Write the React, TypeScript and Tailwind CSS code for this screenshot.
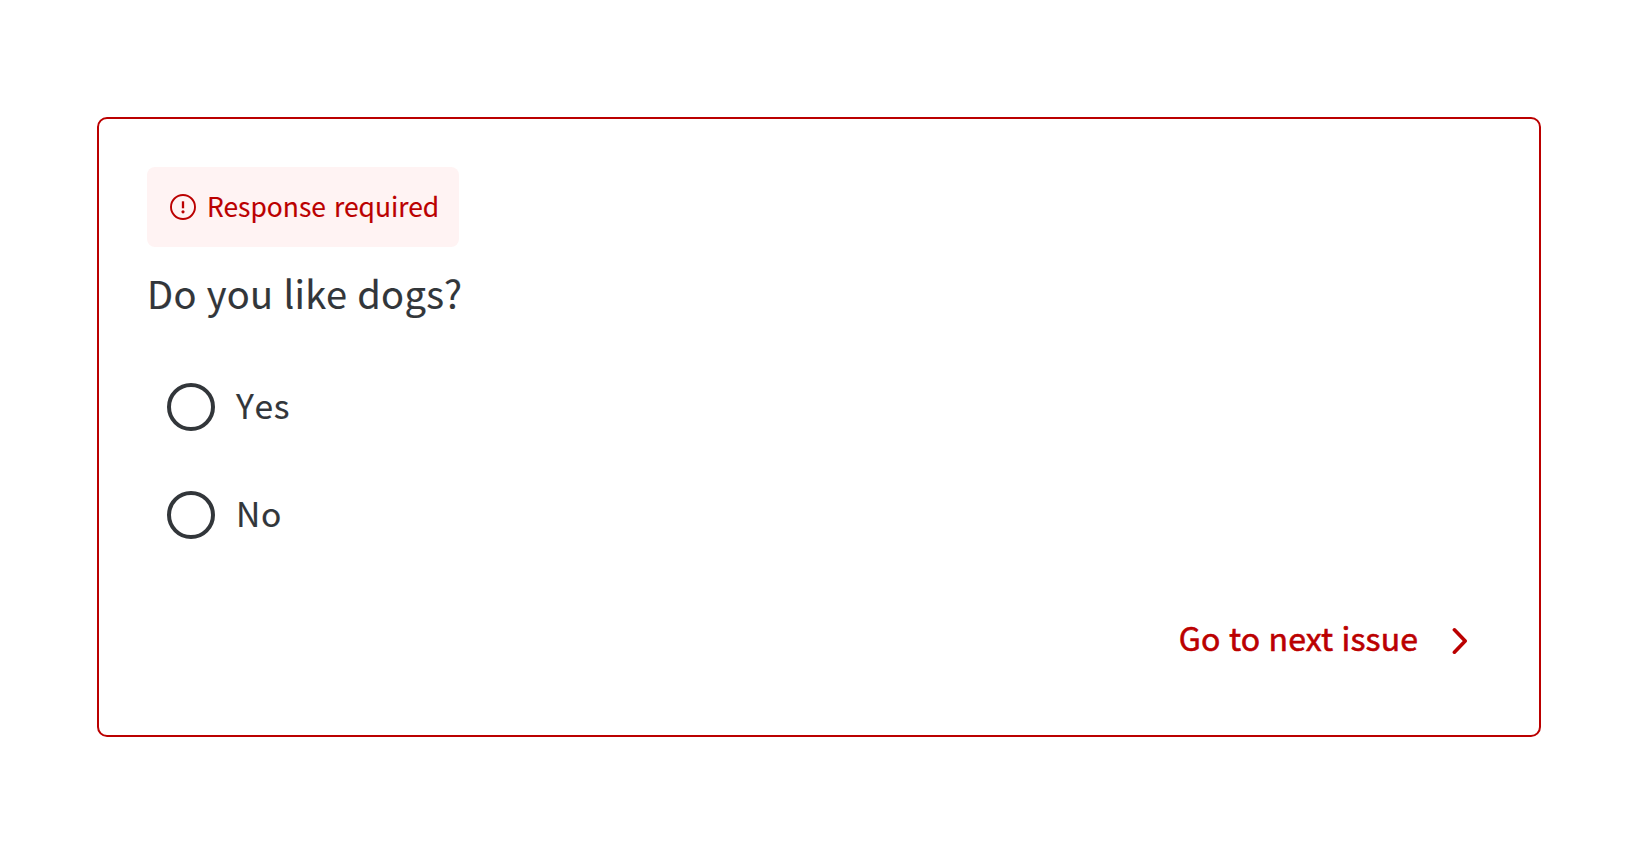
import { useState } from "react";

const choices = ["Yes", "No"];

function AlertIcon() {
  return (
    <svg width="26" height="26" viewBox="0 0 26 26" fill="none" className="shrink-0">
      <circle cx="13" cy="13" r="12" stroke="currentColor" strokeWidth="1.9" />
      <path d="M13 7.3v7" stroke="currentColor" strokeWidth="2.3" />
      <circle cx="13" cy="17.8" r="1.6" fill="currentColor" />
    </svg>
  );
}

function ChevronIcon() {
  return (
    <svg width="16" height="28" viewBox="0 0 16 28" fill="none" className="shrink-0">
      <path
        d="M2.4 2.8 13.2 14 2.4 25.2"
        stroke="currentColor"
        strokeWidth="3.6"
        strokeLinecap="round"
        strokeLinejoin="round"
      />
    </svg>
  );
}

export default function App() {
  const [selected, setSelected] = useState<string | null>(null);

  return (
    <main className="h-[853px] bg-white px-[97px] pt-[117px] font-['Noto_Sans_CJK_SC',sans-serif] text-[#32363a]">
      <section className="flex h-[620px] w-[1444px] flex-col rounded-[10px] border-2 border-[#b00] pl-12 pt-12">
        <div
          role="alert"
          className="flex h-20 w-[312px] items-center rounded-lg bg-[#fff3f3] pl-[23px] text-[#b00]"
        >
          <AlertIcon />
          <span className="mb-px ml-[11px] whitespace-nowrap text-[26.4px] leading-none [-webkit-text-stroke:0.15px] [word-spacing:2.2px]">
            Response required
          </span>
        </div>

        <h1 className="mt-[26px] text-[38px] leading-[40px] tracking-[0.35px] [-webkit-text-stroke:0.15px] [word-spacing:1px]">
          Do you like dogs?
        </h1>

        <div role="radiogroup" className="mt-[70px] flex flex-col gap-[60px] pl-5">
          {choices.map((choice) => (
            <button
              key={choice}
              role="radio"
              aria-checked={selected === choice}
              onClick={() => setSelected(choice)}
              className="flex h-12 items-center gap-[21px]"
            >
              <span className="flex size-12 items-center justify-center rounded-full border-4 border-[#32363a]">
                {selected === choice && (
                  <span className="size-6 rounded-full bg-[#32363a]" />
                )}
              </span>
              <span className="mb-1 text-[33.6px] leading-none tracking-[0.6px] [-webkit-text-stroke:0.15px] [font-kerning:none]">
                {choice}
              </span>
            </button>
          ))}
        </div>

        <button className="mr-[71px] mt-[82px] flex h-[40px] items-center self-end text-[#b00]">
          <span className="mb-[9px] text-[32px] leading-none tracking-[0.1px] [-webkit-text-stroke:0.6px] [word-spacing:1.2px]">
            Go to next issue
          </span>
          <span className="ml-[34px]">
            <ChevronIcon />
          </span>
        </button>
      </section>
    </main>
  );
}
